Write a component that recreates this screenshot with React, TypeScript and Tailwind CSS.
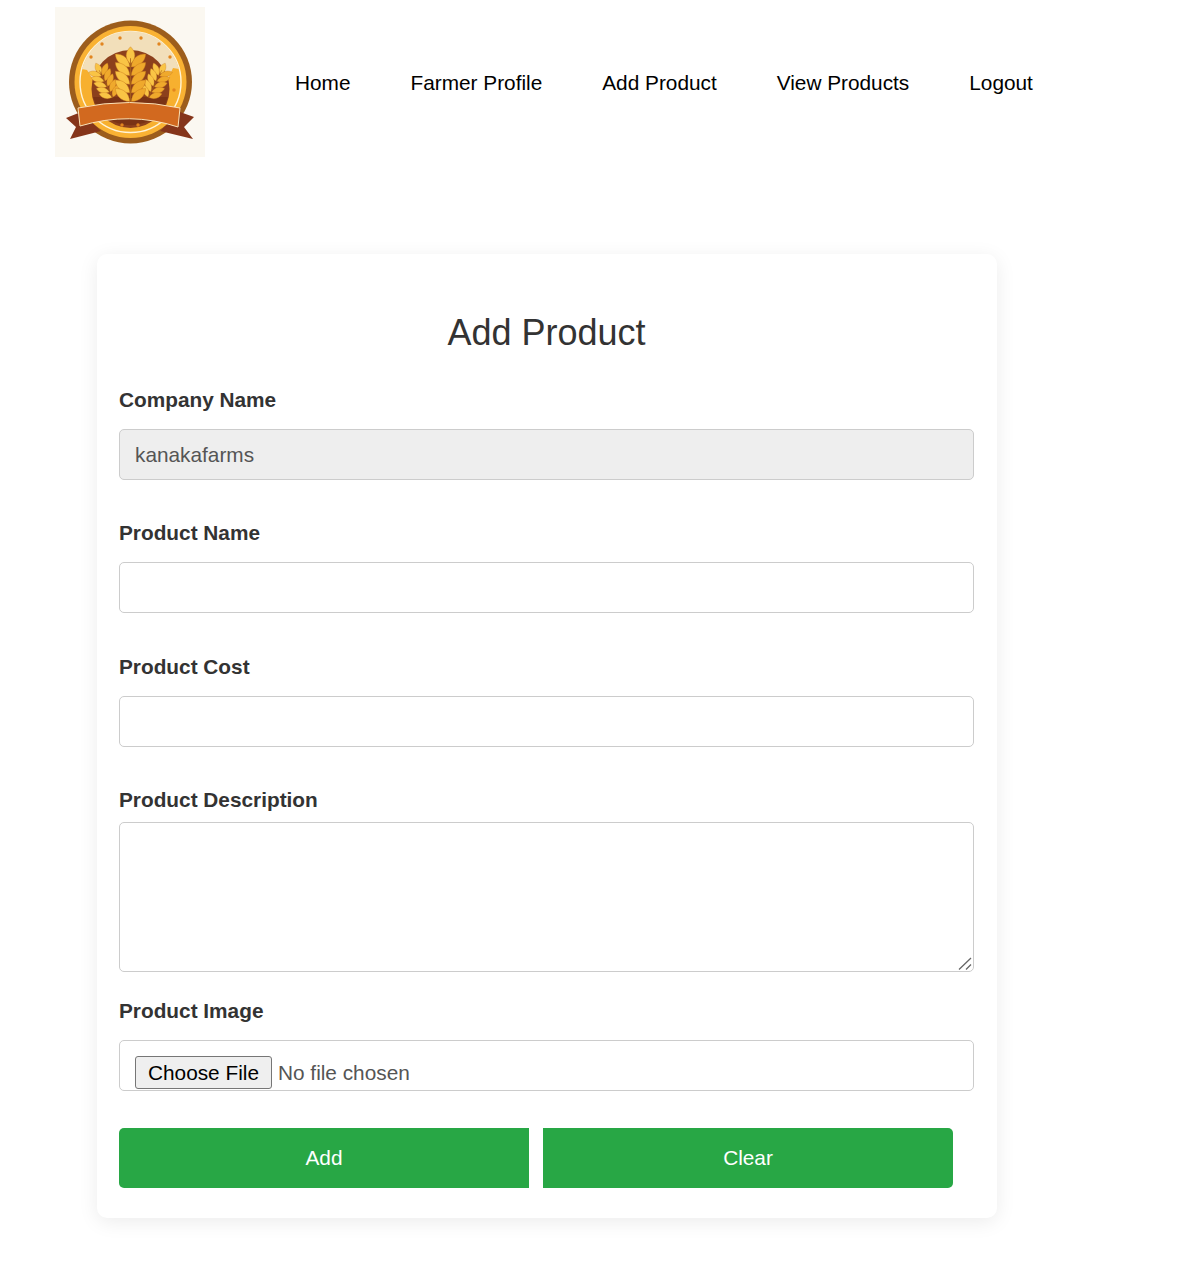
const navLinks = ['Home', 'Farmer Profile', 'Add Product', 'View Products', 'Logout']

// one wheat ear: pairs of grains up a stem, top grain on the tip
function WheatEar({ x, y, scale, rotate }: { x: number; y: number; scale: number; rotate: number }) {
  const rows = [0, 1, 2, 3, 4]
  return (
    <g transform={`translate(${x} ${y}) rotate(${rotate}) scale(${scale})`}>
      {rows.map((r) => (
        <g key={r} transform={`translate(0 ${r * 12 - 22})`}>
          <path d="M-1 8C-14 8 -21 -2 -21 -10C-10 -10 -2 -4 -1 8Z" fill="#f9c445" stroke="#c97a1d" strokeWidth="0.6" />
          <path d="M1 8C14 8 21 -2 21 -10C10 -10 2 -4 1 8Z" fill="#efa92c" stroke="#c97a1d" strokeWidth="0.6" />
        </g>
      ))}
      <path d="M0 -42C8 -34 8 -26 0 -18C-8 -26 -8 -34 0 -42Z" fill="#f9c445" stroke="#c97a1d" strokeWidth="0.6" />
      <path d="M0 -26V36" stroke="#a8611a" strokeWidth="1.2" />
    </g>
  )
}

function Logo() {
  return (
    <svg viewBox="0 0 150 150" className="w-[150px] h-[150px] shrink-0">
      <rect width="150" height="150" fill="#fbf8f1" />
      <circle cx="75.5" cy="75" r="61.5" fill="#9c5d1c" />
      <circle cx="75.5" cy="75" r="56" fill="#f9b233" />
      <circle cx="75.5" cy="75" r="50.5" fill="#f7b02f" stroke="#fff4d8" strokeWidth="1.4" />
      {/* cream band with the gold peaks on either side */}
      <path d="M27 62A50 50 0 0 1 124 62L118 61L112 74H39L32 63Z" fill="#f2dfba" />
      <circle cx="75.5" cy="82" r="39" fill="#8c401c" />
      <path d="M38 90H113A39 39 0 0 1 38 90Z" fill="#7a3315" />
      {[
        [36, 50], [47, 37], [65, 31], [86, 31], [104, 37], [115, 50], [119, 83], [67, 118], [83, 118],
      ].map(([cx, cy]) => (
        <circle key={`${cx}-${cy}`} cx={cx} cy={cy} r="1.7" fill="#e2851f" />
      ))}
      <WheatEar x={50} y={75} scale={0.5} rotate={-26} />
      <WheatEar x={101} y={75} scale={0.5} rotate={26} />
      <WheatEar x={75.5} y={70} scale={0.72} rotate={0} />
      {/* ribbon */}
      <path d="M26 105L11 111L21 120L15 132L46 124Z" fill="#85351a" />
      <path d="M125 105L139 110L129 120L138 132L105 124Z" fill="#85351a" />
      <path d="M23 101Q75 90 125 101L123 120Q75 104 25 119Z" fill="#d2691f" stroke="#fbe3b8" strokeWidth="1" />
    </svg>
  )
}

function Field({ label, className, children }: { label: string; className: string; children: React.ReactNode }) {
  return (
    <div className={className}>
      <label className="block h-[23px] text-[20.8px] leading-[23px] font-bold text-[#333]">{label}</label>
      {children}
    </div>
  )
}

const inputClass =
  'block w-[855px] h-[51px] mt-[18px] px-[15px] border border-[#ccc] rounded-[5px] text-[20.8px] text-[#555] outline-none'

export default function App() {
  return (
    <div className="min-h-[1277px] bg-white font-['Liberation_Sans',Arial,sans-serif] text-black">
      <header className="flex items-center pl-[55px] pt-[7px]">
        <Logo />
        <nav className="flex gap-[60px] ml-[90px] text-[20.8px] leading-[23px]">
          {navLinks.map((link) => (
            <a key={link} href="#" className="text-black">
              {link}
            </a>
          ))}
        </nav>
      </header>

      <main className="w-[900px] ml-[97px] mt-[97px] pt-[59px] pb-[30px] pl-[22px] bg-white rounded-[10px] shadow-[0_4px_20px_rgba(0,0,0,0.08)]">
        <h2 className="w-[855px] text-center text-[36px] leading-[40px] font-normal text-[#333]">Add Product</h2>

        <Field label="Company Name" className="mt-[35px]">
          <input className={`${inputClass} bg-[#eee] border-[#c4c4c4]`} value="kanakafarms" disabled readOnly />
        </Field>
        <Field label="Product Name" className="mt-[41px]">
          <input className={inputClass} />
        </Field>
        <Field label="Product Cost" className="mt-[42px]">
          <input className={inputClass} />
        </Field>
        <Field label="Product Description" className="mt-[41px]">
          <div className="relative w-[855px] h-[150px] mt-[11px]">
            <textarea className="block w-full h-full px-[15px] py-[10px] border border-[#ccc] rounded-[5px] text-[20.8px] outline-none resize-none" />
            {/* drag grip */}
            <svg viewBox="0 0 14 13" className="absolute right-[2px] bottom-[2px] w-[14px] h-[13px]">
              <path d="M1 12.5L13 1M8 12.5L13 7.5" stroke="#666" strokeWidth="1.3" fill="none" />
            </svg>
          </div>
        </Field>
        <Field label="Product Image" className="mt-[27px]">
          <input
            type="file"
            className="block w-[855px] h-[51px] mt-[18px] pt-[15px] px-[15px] border border-[#ccc] rounded-[5px] text-[20.8px] leading-[23px] text-[#555] overflow-hidden file:h-[33px] file:mr-[6px] file:px-[12px] file:bg-[#efefef] file:border file:border-[#767676] file:rounded-[3px] file:text-black"
          />
        </Field>

        <div className="flex gap-[14px] mt-[37px]">
          <button className="w-[410px] h-[60px] bg-[#28a745] rounded-l-[5px] text-white text-[20.8px]">Add</button>
          <button className="w-[410px] h-[60px] bg-[#28a745] rounded-r-[5px] text-white text-[20.8px]">Clear</button>
        </div>
      </main>
    </div>
  )
}
